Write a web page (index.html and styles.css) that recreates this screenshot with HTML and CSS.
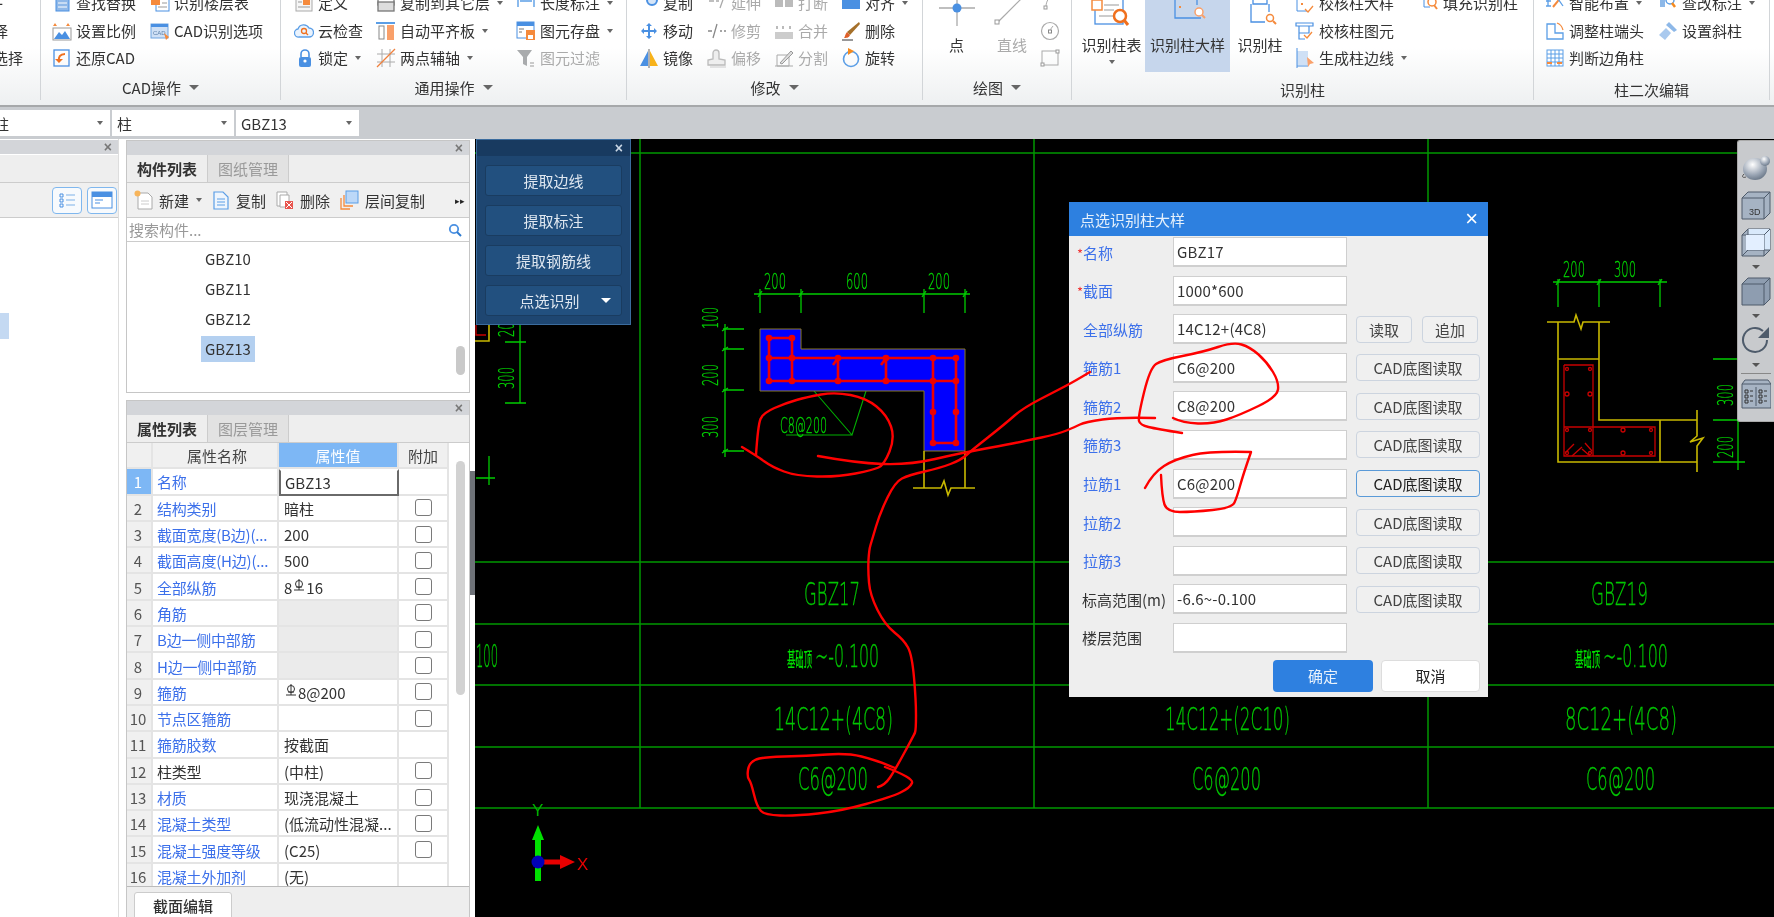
FILE: index.html
```html
<!DOCTYPE html>
<html lang="zh-CN">
<head>
<meta charset="utf-8">
<title>点选识别柱大样</title>
<link rel="stylesheet" href="styles.css">
</head>
<body>
<div class="app">
  <header class="ribbon">
    <section class="rg g0">
      <div class="rb-body">
        <div class="rb-item neg"><span class="plus">+</span></div>
        <div class="rb-item neg"><span>择</span></div>
        <div class="rb-item neg"><span>选择</span></div>
      </div>
    </section>
    <section class="rg g1">
      <div class="rb-body">
        <div class="rb-item"><svg class="ic" viewBox="0 0 20 20"><rect x="4" y="1" width="13" height="17" fill="#8fb8e8" stroke="#4a90e2"/><path d="M6 6h9M6 10h9M6 14h9" stroke="#fff"/></svg><span>查找替换</span></div>
        <div class="rb-item"><svg class="ic" viewBox="0 0 20 20"><path d="M1 5l2-3 2 3zM14 5l2-3 2 3z" fill="#f58a3c"/><rect x="1" y="7" width="18" height="12" fill="#fff" stroke="#999"/><path d="M2 18l5-7 3 3 3-4 5 8z" fill="#4a90e2"/></svg><span>设置比例</span></div>
        <div class="rb-item"><svg class="ic" viewBox="0 0 20 20"><rect x="2" y="2" width="15" height="16" fill="none" stroke="#4a90e2" stroke-width="1.3"/><path d="M13 6c-5 0-7 3-6 8" fill="none" stroke="#f0701e" stroke-width="2"/><path d="M3 11l4 4 4-4z" fill="#f0701e"/></svg><span>还原CAD</span></div>
        <div class="rb-item"><svg class="ic" viewBox="0 0 20 20"><rect x="6" y="1" width="13" height="17" fill="#fff" stroke="#4a90e2"/><rect x="1" y="3" width="9" height="9" fill="#f58a3c"/><path d="M12 6h5M12 10h5M8 14h9" stroke="#999"/></svg><span>识别楼层表</span></div>
        <div class="rb-item"><svg class="ic" viewBox="0 0 20 20"><rect x="1" y="3" width="17" height="14" fill="#cfe0f5" stroke="#6fa4e0"/><rect x="1" y="3" width="17" height="3" fill="#4a90e2"/><text class="ic-tx" x="3" y="14">CAD</text><path d="M14 12l5 4-3 3z" fill="#f58a3c"/></svg><span>CAD识别选项</span></div>
      </div>
      <div class="rb-label"><span>CAD操作</span><i class="caret big"></i></div>
    </section>
    <section class="rg g2">
      <div class="rb-body">
        <div class="rb-item"><svg class="ic" viewBox="0 0 20 20"><rect x="2" y="1" width="16" height="17" fill="#f6f6f6" stroke="#aaa"/><rect x="9" y="6" width="7" height="6" fill="#f58a3c"/><path d="M4 9h4M4 14h12" stroke="#999"/></svg><span>定义</span></div>
        <div class="rb-item"><svg class="ic" viewBox="0 0 20 20"><path d="M5 16a4 4 0 0 1-1-8 6 6 0 0 1 11-1 4.500 4.500 0 0 1 0 9z" fill="#eaf3fd" stroke="#5b9ee6" stroke-width="1.300"/><circle cx="10" cy="10" r="2.500" fill="none" stroke="#f0701e" stroke-width="1.300"/><path d="M12 12l2 2" stroke="#f0701e" stroke-width="1.300"/></svg><span>云检查</span></div>
        <div class="rb-item"><svg class="ic" viewBox="0 0 20 20"><path d="M7 9V6a4 4 0 0 1 8 0v3" fill="none" stroke="#4a90e2" stroke-width="1.600"/><rect x="5" y="9" width="12" height="10" rx="2" fill="#4a90e2"/><circle cx="11" cy="13" r="1.600" fill="#fff"/></svg><span>锁定</span><i class="caret"></i></div>
        <div class="rb-item"><svg class="ic" viewBox="0 0 20 20"><rect x="2" y="-2" width="16" height="14" fill="#fff" stroke="#777" stroke-width="1.300"/><rect x="2" y="9" width="16" height="9" fill="#ddd" stroke="#777" stroke-width="1.300"/></svg><span>复制到其它层</span><i class="caret"></i></div>
        <div class="rb-item"><svg class="ic" viewBox="0 0 20 20"><rect x="0" y="1" width="19" height="2" fill="#5b9ee6"/><rect x="3" y="5" width="5" height="13" fill="#fff" stroke="#888"/><rect x="11" y="4" width="7" height="15" fill="#f9a06a"/></svg><span>自动平齐板</span><i class="caret"></i></div>
        <div class="rb-item"><svg class="ic" viewBox="0 0 20 20"><path d="M6 1v18M14 1v18M1 6h18M1 14h18" stroke="#aaa"/><path d="M1 19L19 1" stroke="#f0803c" stroke-width="1.300"/></svg><span>两点辅轴</span><i class="caret"></i></div>
        <div class="rb-item"><svg class="ic" viewBox="0 0 20 20"><path d="M2 2v12M18 2v12M4 8h12" stroke="#5b9ee6" stroke-width="1.400"/></svg><span>长度标注</span><i class="caret"></i></div>
        <div class="rb-item"><svg class="ic" viewBox="0 0 20 20"><rect x="1" y="1" width="17" height="16" fill="#fff" stroke="#4a90e2"/><rect x="1" y="1" width="17" height="4" fill="#4a90e2"/><path d="M3 8h5M3 11h3" stroke="#777"/><rect x="10" y="9" width="9" height="10" fill="#f58a3c"/><rect x="12" y="14" width="5" height="4" fill="#fff"/></svg><span>图元存盘</span><i class="caret"></i></div>
        <div class="rb-item off"><svg class="ic" viewBox="0 0 20 20"><path d="M1 2h15l-5 7v9l-4-2V9z" fill="#a9abad"/><path d="M14 15h4M14 18h4" stroke="#bbb" stroke-width="1.500"/></svg><span>图元过滤</span></div>
      </div>
      <div class="rb-label"><span>通用操作</span><i class="caret big"></i></div>
    </section>
    <section class="rg g3">
      <div class="rb-body">
        <div class="rb-item"><svg class="ic" viewBox="0 0 20 20"><circle cx="13" cy="7" r="5" fill="#d5e5f8" stroke="#4a90e2" stroke-width="2"/></svg><span>复制</span></div>
        <div class="rb-item"><svg class="ic" viewBox="0 0 20 20"><path d="M10 2l3 3h-2v4h4V7l3 3-3 3v-2h-4v4h2l-3 3-3-3h2v-4H5v2l-3-3 3-3v2h4V5H7z" fill="#4a90e2"/></svg><span>移动</span></div>
        <div class="rb-item"><svg class="ic" viewBox="0 0 20 20"><path d="M9 3v15H1z" fill="#4a90e2"/><path d="M11 3v15h8z" fill="#f7b21a"/><path d="M10 1v19" stroke="#666"/></svg><span>镜像</span></div>
        <div class="rb-item off"><svg class="ic" viewBox="0 0 20 20"><path d="M2 8h5M9 8h3M18 1l-5 14" stroke="#aaa" stroke-width="1.300"/></svg><span>延伸</span></div>
        <div class="rb-item off"><svg class="ic" viewBox="0 0 20 20"><path d="M1 10h4M13 10h2M17 10h2M10 3l-4 14" stroke="#888" stroke-width="1.300"/></svg><span>修剪</span></div>
        <div class="rb-item off"><svg class="ic" viewBox="0 0 20 20"><path d="M1 17v-5l5-1V5a3 3 0 0 1 6 0v6l6 1v5z" fill="#eee" stroke="#bbb" stroke-width="1.300"/><path d="M3 19h16" stroke="#ccc"/></svg><span>偏移</span></div>
        <div class="rb-item off"><svg class="ic" viewBox="0 0 20 20"><rect x="1" y="5" width="8" height="9" fill="#bbb"/><rect x="11" y="5" width="8" height="9" fill="#bbb"/></svg><span>打断</span></div>
        <div class="rb-item off"><svg class="ic" viewBox="0 0 20 20"><rect x="1" y="11" width="18" height="7" fill="#ccc"/><path d="M3 5v3M9 5v3M16 5v3" stroke="#bbb" stroke-width="2"/></svg><span>合并</span></div>
        <div class="rb-item off"><svg class="ic" viewBox="0 0 20 20"><path d="M1 18h18M3 7h12v11H3z" fill="none" stroke="#aaa"/><path d="M6 15l11-12 2 2L8 16z" fill="#ddd" stroke="#999"/></svg><span>分割</span></div>
        <div class="rb-item"><svg class="ic" viewBox="0 0 20 20"><rect x="1" y="2" width="18" height="14" fill="#4a90e2"/></svg><span>对齐</span><i class="caret"></i></div>
        <div class="rb-item"><svg class="ic" viewBox="0 0 20 20"><path d="M18 1l1 2L9 14l-3-3z" fill="#a5702a"/><path d="M6 11l3 3c-1 3-4 3-6 3 1-1 1-4 3-6z" fill="#e0612a"/><path d="M1 19h11" stroke="#333"/></svg><span>删除</span></div>
        <div class="rb-item"><svg class="ic" viewBox="0 0 20 20"><circle cx="10" cy="11" r="7.500" fill="none" stroke="#5b9ee6" stroke-width="1.600"/><path d="M7 0l6 3-6 4z" fill="#f58a1e"/></svg><span>旋转</span></div>
      </div>
      <div class="rb-label"><span>修改</span><i class="caret big"></i></div>
    </section>
    <section class="rg g4">
      <div class="rb-body">
        <div class="rb-big"><svg class="big-ic" viewBox="0 0 46 46"><path d="M5 19h36M23 0v37" stroke="#aaa" stroke-width="1.300"/><circle cx="23" cy="19" r="4.500" fill="#4a90e2"/></svg><span>点</span></div>
        <div class="rb-big off"><svg class="big-ic" viewBox="0 0 46 46"><path d="M9 33L37 5" stroke="#aaa" stroke-width="1.200"/><rect x="6" y="31" width="4" height="4" fill="#fff" stroke="#999"/></svg><span>直线</span></div>
        <div class="rb-item off"><svg class="ic" viewBox="0 0 20 20"><path d="M6 14c0-6 3-10 8-13" fill="none" stroke="#aaa"/><rect x="4" y="13" width="3" height="3" fill="#fff" stroke="#999"/></svg></div>
        <div class="rb-item off"><svg class="ic" viewBox="0 0 20 20"><circle cx="10" cy="10" r="8.500" fill="none" stroke="#aaa" stroke-width="1.200"/><rect x="8.500" y="9" width="3" height="3" fill="#fff" stroke="#888"/><path d="M10 9l3-4" stroke="#aaa"/></svg></div>
        <div class="rb-item off"><svg class="ic" viewBox="0 0 20 20"><rect x="2" y="3" width="16" height="14" fill="none" stroke="#aaa"/><rect x="1" y="15" width="3" height="3" fill="#fff" stroke="#999"/><rect x="16" y="2" width="3" height="3" fill="#fff" stroke="#999"/></svg></div>
      </div>
      <div class="rb-label"><span>绘图</span><i class="caret big"></i></div>
    </section>
    <section class="rg g5">
      <div class="rb-body">
        <div class="rb-big"><svg class="big-ic" viewBox="0 0 46 46"><rect x="6" y="2" width="28" height="33" fill="#fff" stroke="#4a90e2" stroke-width="1.300"/><rect x="6" y="5" width="28" height="3" fill="#7fb2ea"/><path d="M15 16h15M15 21h10M10 27h14" stroke="#999"/><rect x="3" y="11" width="10" height="10" fill="#fff" stroke="#f58a3c" stroke-width="1.500"/><circle cx="31" cy="27" r="6" fill="#fff" stroke="#f0701e" stroke-width="2.500"/><path d="M35 31l4 5" stroke="#f0701e" stroke-width="3"/></svg><span>识别柱表</span><i class="caret under"></i></div>
        <div class="rb-big on"><svg class="big-ic" viewBox="0 0 46 46"><path d="M10 0v29h26" fill="none" stroke="#4a90e2" stroke-width="1.300"/><path d="M14 8h2M14 18h2M24 8h2" stroke="#f58a3c" stroke-width="2" fill="none"/><path d="M32 -2v18" stroke="#4a90e2" stroke-width="1.300"/><circle cx="34" cy="23" r="4" fill="#fff" stroke="#f9a06a" stroke-width="1.500"/><path d="M37 26l3 3" stroke="#f9a06a" stroke-width="2"/></svg><span>识别柱大样</span></div>
        <div class="rb-big r5"><svg class="big-ic" viewBox="0 0 46 46"><path d="M10 1h28v4H10zM16 5v10h14V5" fill="#fff" stroke="#4a90e2" stroke-width="1.300"/><path d="M14 15v18h14" fill="none" stroke="#4a90e2" stroke-width="1.300"/><path d="M32 15v8" stroke="#4a90e2" stroke-width="1.300"/><circle cx="33" cy="29" r="3.500" fill="#fff" stroke="#f58a3c" stroke-width="1.500"/><path d="M36 32l3 3" stroke="#f58a3c" stroke-width="2"/></svg><span>识别柱</span></div>
        <div class="rb-item"><svg class="ic" viewBox="0 0 20 20"><path d="M2 4v14h10" fill="none" stroke="#4a90e2"/><path d="M6 5h2M6 11h2" stroke="#f58a3c" stroke-width="2"/><path d="M10 16l3 3 5-6" fill="none" stroke="#f58a3c" stroke-width="1.300"/></svg><span>校核柱大样</span></div>
        <div class="rb-item"><svg class="ic" viewBox="0 0 20 20"><path d="M1 2h17v3H1zM4 5v7h10V5M4 5v13h6" fill="none" stroke="#4a90e2" stroke-width="1.200"/><path d="M9 14l3 3 5-6" fill="none" stroke="#f58a3c" stroke-width="1.300"/></svg><span>校核柱图元</span></div>
        <div class="rb-item"><svg class="ic" viewBox="0 0 20 20"><rect x="2" y="3" width="11" height="14" fill="#cfe0f5"/><path d="M2 0v20M2 18h11" stroke="#4a90e2"/><path d="M12 9l7 6-4 1-2 3z" fill="#f9a06a"/></svg><span>生成柱边线</span><i class="caret"></i></div>
        <div class="rb-item"><svg class="ic" viewBox="0 0 20 20"><path d="M5 0v14h6" fill="none" stroke="#4a90e2"/><circle cx="13" cy="9" r="4" fill="#fff" stroke="#f58a3c" stroke-width="1.500"/><path d="M15 12l3 4" stroke="#f58a3c" stroke-width="2"/></svg><span>填充识别柱</span></div>
      </div>
      <div class="rb-label low"><span>识别柱</span></div>
    </section>
    <section class="rg g6">
      <div class="rb-body">
        <div class="rb-item"><svg class="ic" viewBox="0 0 20 20"><path d="M1 3h5M1 8h5M1 13h5M3 3v10" stroke="#5b9ee6" stroke-width="1.300"/><path d="M8 14L17 3" stroke="#f58a3c" stroke-width="2"/><path d="M11 3l7 10" stroke="#5b9ee6" stroke-width="1.300"/></svg><span>智能布置</span><i class="caret"></i></div>
        <div class="rb-item"><svg class="ic" viewBox="0 0 20 20"><path d="M2 3h8v9h8v6H2z" fill="#fff" stroke="#5b9ee6" stroke-width="1.300"/><path d="M12 2c3 1 5 3 6 7" fill="none" stroke="#f58a3c" stroke-width="1.200"/></svg><span>调整柱端头</span></div>
        <div class="rb-item"><svg class="ic" viewBox="0 0 20 20"><rect x="2" y="2" width="16" height="16" fill="#fff" stroke="#5b9ee6"/><path d="M6 2v16M10 2v16M14 2v16M2 6h16M2 10h16M2 14h16" stroke="#5b9ee6"/><path d="M2 15h5M12 15h5" stroke="#f58a3c" stroke-width="2"/></svg><span>判断边角柱</span></div>
        <div class="rb-item"><svg class="ic" viewBox="0 0 20 20"><path d="M2 2h5v12H2z" fill="#8db8e8"/><circle cx="12" cy="7" r="4" fill="#fff" stroke="#5b9ee6" stroke-width="1.500"/><path d="M14 10l3 4" stroke="#f58a1e" stroke-width="2.500"/></svg><span>查改标注</span><i class="caret"></i></div>
        <div class="rb-item"><svg class="ic" viewBox="0 0 20 20"><path d="M11 1l8 8-3 2-8-7z" fill="#8db8e8"/><path d="M8 7l5 5-6 7-6-5z" fill="#a9c9ee"/></svg><span>设置斜柱</span></div>
      </div>
      <div class="rb-label low"><span>柱二次编辑</span></div>
    </section>
  </header>

  <div class="filterbar">
    <div class="combo first"><span class="combo-tx cut">柱</span><i class="caret"></i></div>
    <div class="combo second"><span class="combo-tx">柱</span><i class="caret"></i></div>
    <div class="combo third"><span class="combo-tx">GBZ13</span><i class="caret"></i></div>
  </div>

  <main class="workspace">
    <aside class="side">
      <div class="ph"><span class="ph-x">×</span></div>
      <div class="side-tabs"></div>
      <div class="side-tools">
        <span class="iconbtn"><svg viewBox="0 0 28 24" class="ib"><path d="M7 6h3v3H7zM7 11h3v3H7zM7 16h3v3H7z" fill="none" stroke="#4a90e2"/><path d="M13 7h9M13 12h9M13 17h9" stroke="#7fb2ea" stroke-width="1.200"/></svg></span>
        <span class="iconbtn"><svg viewBox="0 0 28 24" class="ib"><rect x="4" y="4" width="20" height="16" fill="#fff" stroke="#4a90e2"/><rect x="4" y="4" width="20" height="5" fill="#4a90e2"/><path d="M7 12h8M7 15h5" stroke="#4a90e2" stroke-width="1.200"/></svg></span>
      </div>
      <div class="side-list">
        <div class="sel-stub"></div>
        <div class="clip-row">)</div>
        <div class="clip-row">)</div>
      </div>
    </aside>

    <div class="col">
      <section class="panel list-panel">
        <div class="ph"><span class="ph-x">×</span></div>
        <div class="tabs"><span class="tab act">构件列表</span><span class="tab">图纸管理</span></div>
        <div class="tools">
          <span class="tool t-new"><svg class="ic" viewBox="0 0 20 20"><path d="M4 3h10l4 4v12H4z" fill="#fff" stroke="#aaa"/><path d="M7 11h8M7 14h8" stroke="#ccc"/><circle cx="3.500" cy="3.500" r="3" fill="#f7b45a"/></svg>新建<i class="caret"></i></span>
          <span class="tool t-copy"><svg class="ic" viewBox="0 0 20 20"><path d="M3 2h9l5 5v12H3z" fill="#eef5fd" stroke="#5b9ee6" stroke-width="1.200"/><path d="M6 9h8M6 12h8M6 15h8" stroke="#5b9ee6"/></svg>复制</span>
          <span class="tool t-del"><svg class="ic" viewBox="0 0 20 20"><path d="M2 2h10v14H2z" fill="#fff" stroke="#aaa"/><path d="M5 5h9v12H5z" fill="#fff" stroke="#aaa"/><rect x="10" y="11" width="8" height="8" fill="#e8554e"/><path d="M11 12l6 6M17 12l-6 6" stroke="#fff"/></svg>删除</span>
          <span class="tool t-layer"><svg class="ic" viewBox="0 0 20 20"><path d="M1 8v11h9" fill="none" stroke="#f58a3c" stroke-width="1.300"/><path d="M4 5v11h9" fill="none" stroke="#f58a3c" stroke-width="1.300"/><rect x="6" y="1" width="12" height="12" fill="#bcd8f8" stroke="#5b9ee6"/></svg>层间复制</span>
          <span class="tool-more">▸▸</span>
        </div>
        <div class="search"><span>搜索构件...</span><svg class="srch" viewBox="0 0 14 14"><circle cx="6" cy="6" r="4.200" fill="none" stroke="#4a90e2" stroke-width="1.800"/><path d="M9 9l4 4" stroke="#2e7bd0" stroke-width="2"/></svg></div>
        <div class="list">
          <div class="li">GBZ10</div>
          <div class="li">GBZ11</div>
          <div class="li">GBZ12</div>
          <div class="li"><span class="li-sel">GBZ13</span></div>
          <div class="list-thumb"></div>
        </div>
      </section>
      <section class="panel prop-panel">
        <div class="ph"><span class="ph-x">×</span></div>
        <div class="tabs"><span class="tab act">属性列表</span><span class="tab">图层管理</span></div>
        <div class="prop-body">
          <div class="grid">
            <div class="c n"></div><div class="c hd nm">属性名称</div><div class="c hd blue">属性值</div><div class="c hd">附加</div>
            <div class="c n blue">1</div><div class="c k">名称</div><div class="c v cur">GBZ13</div><div class="c"></div>
            <div class="c n">2</div><div class="c k">结构类别</div><div class="c v">暗柱</div><div class="c cb"><b></b></div>
            <div class="c n">3</div><div class="c k">截面宽度(B边)(...</div><div class="c v">200</div><div class="c cb"><b></b></div>
            <div class="c n">4</div><div class="c k">截面高度(H边)(...</div><div class="c v">500</div><div class="c cb"><b></b></div>
            <div class="c n">5</div><div class="c k">全部纵筋</div><div class="c v">8<svg class="bar" viewBox="0 0 12 12"><circle cx="6" cy="5" r="3.500" fill="none" stroke="#333"/><path d="M6 0v11M1 11h10M3 8h6" stroke="#333"/></svg>16</div><div class="c cb"><b></b></div>
            <div class="c n">6</div><div class="c k">角筋</div><div class="c v dis"></div><div class="c cb"><b></b></div>
            <div class="c n">7</div><div class="c k">B边一侧中部筋</div><div class="c v dis"></div><div class="c cb"><b></b></div>
            <div class="c n">8</div><div class="c k">H边一侧中部筋</div><div class="c v dis"></div><div class="c cb"><b></b></div>
            <div class="c n">9</div><div class="c k">箍筋</div><div class="c v"><svg class="bar" viewBox="0 0 12 12"><circle cx="6" cy="5" r="3.500" fill="none" stroke="#333"/><path d="M6 0v11M1 11h10M3 8h6" stroke="#333"/></svg>8@200</div><div class="c cb"><b></b></div>
            <div class="c n">10</div><div class="c k">节点区箍筋</div><div class="c v"></div><div class="c cb"><b></b></div>
            <div class="c n">11</div><div class="c k">箍筋胶数</div><div class="c v">按截面</div><div class="c"></div>
            <div class="c n">12</div><div class="c k plain">柱类型</div><div class="c v">(中柱)</div><div class="c cb"><b></b></div>
            <div class="c n">13</div><div class="c k">材质</div><div class="c v">现浇混凝土</div><div class="c cb"><b></b></div>
            <div class="c n">14</div><div class="c k">混凝土类型</div><div class="c v">(低流动性混凝...</div><div class="c cb"><b></b></div>
            <div class="c n">15</div><div class="c k">混凝土强度等级</div><div class="c v">(C25)</div><div class="c cb"><b></b></div>
            <div class="c n">16</div><div class="c k">混凝土外加剂</div><div class="c v">(无)</div><div class="c"></div>
          </div>
          <div class="prop-track"><div class="prop-thumb"></div></div>
        </div>
        <div class="prop-foot"><span class="foot-tab">截面编辑</span></div>
      </section>
    </div>

    <div class="splitter"><div class="split-handle"></div></div>

    <div class="canvas">
      <svg class="layer" viewBox="475 139 1299 778">
        <g class="grid-l">
          <path d="M475 153H1774M475 562H1774M475 624H1774M475 685H1774M475 747H1774M475 808H1774"/>
          <path d="M640 139V808M1034 139V808M1428 139V808"/>
        </g>
        <g class="dim">
          <path d="M754 294H970M760 289V313M801 289V313M924 289V313M965 289V313"/>
          <path d="M758 297l4-6M799 297l4-6M922 297l4-6M963 297l4-6"/>
          <path d="M725 324V457M723 329H744M723 349H744M723 390H744M723 451H744"/>
          <path d="M722 331l6-4M722 351l6-4M722 392l6-4M722 453l6-4"/>
          <path d="M520 324V403M505 342H526M505 403H526M489 456V485M476 478H495"/>
          <path d="M1553 282H1667M1558 279V307M1599 279V307M1660 279V307"/>
          <path d="M1556 285l4-6M1597 285l4-6M1658 285l4-6"/>
          <path d="M1713 359H1738M1713 420H1738M1713 462H1745M1738 420V470"/>
        </g>
        <path class="lead" d="M814 391L852 435L866 391M786 435H852"/>
        <g class="cad">
          <text x="764" y="289" textLength="22" lengthAdjust="spacingAndGlyphs">200</text>
          <text x="846" y="289" textLength="22" lengthAdjust="spacingAndGlyphs">600</text>
          <text x="928" y="289" textLength="22" lengthAdjust="spacingAndGlyphs">200</text>
          <text x="1563" y="277" textLength="22" lengthAdjust="spacingAndGlyphs">200</text>
          <text x="1614" y="277" textLength="22" lengthAdjust="spacingAndGlyphs">300</text>
          <text transform="translate(718 329) rotate(-90)" textLength="22" lengthAdjust="spacingAndGlyphs">100</text>
          <text transform="translate(718 386) rotate(-90)" textLength="22" lengthAdjust="spacingAndGlyphs">200</text>
          <text transform="translate(718 438) rotate(-90)" textLength="22" lengthAdjust="spacingAndGlyphs">300</text>
          <text transform="translate(514 389) rotate(-90)" textLength="22" lengthAdjust="spacingAndGlyphs">300</text>
          <text transform="translate(514 337) rotate(-90)" textLength="22" lengthAdjust="spacingAndGlyphs">200</text>
          <text transform="translate(1733 406) rotate(-90)" textLength="22" lengthAdjust="spacingAndGlyphs">300</text>
          <text transform="translate(1733 458) rotate(-90)" textLength="22" lengthAdjust="spacingAndGlyphs">200</text>
          <text x="780" y="433" textLength="47" lengthAdjust="spacingAndGlyphs">C8@200</text>
        </g>
        <g class="cad lg">
          <text x="804" y="605" textLength="56" lengthAdjust="spacingAndGlyphs">GBZ17</text>
          <text x="1591" y="605" textLength="57" lengthAdjust="spacingAndGlyphs">GBZ19</text>
          <text x="476" y="667" textLength="22" lengthAdjust="spacingAndGlyphs">100</text>
          <text x="815" y="667" textLength="64" lengthAdjust="spacingAndGlyphs">~-0.100</text>
          <text x="1603" y="667" textLength="65" lengthAdjust="spacingAndGlyphs">~-0.100</text>
          <text x="774" y="730" textLength="119" lengthAdjust="spacingAndGlyphs">14C12+(4C8)</text>
          <text x="1165" y="730" textLength="125" lengthAdjust="spacingAndGlyphs">14C12+(2C10)</text>
          <text x="1565" y="730" textLength="112" lengthAdjust="spacingAndGlyphs">8C12+(4C8)</text>
          <text x="798" y="790" textLength="70" lengthAdjust="spacingAndGlyphs">C6@200</text>
          <text x="1192" y="790" textLength="69" lengthAdjust="spacingAndGlyphs">C6@200</text>
          <text x="1586" y="790" textLength="69" lengthAdjust="spacingAndGlyphs">C6@200</text>
        </g>
        <g class="cad cn">
          <text x="787" y="667" textLength="25" lengthAdjust="spacingAndGlyphs">基础顶</text>
          <text x="1575" y="667" textLength="25" lengthAdjust="spacingAndGlyphs">基础顶</text>
        </g>
        <path class="col-blue" d="M760 329H801V349H965V451H924V391H760Z"/>
        <g class="bar-red">
          <path d="M769 338H792V381M769 338V381M769 358H956M769 381H956M933 358V443H956V358M838 358V381M886 358V381M838 358l-5 7M886 358l-5 7"/>
          <g class="dots">
            <circle cx="769" cy="338" r="3.300"/><circle cx="792" cy="338" r="3.300"/><circle cx="769" cy="358" r="3.300"/><circle cx="792" cy="358" r="3.300"/>
            <circle cx="769" cy="381" r="3.300"/><circle cx="792" cy="381" r="3.300"/><circle cx="838" cy="358" r="3.300"/><circle cx="838" cy="381" r="3.300"/>
            <circle cx="886" cy="358" r="3.300"/><circle cx="886" cy="381" r="3.300"/><circle cx="933" cy="358" r="3.300"/><circle cx="956" cy="358" r="3.300"/>
            <circle cx="933" cy="381" r="3.300"/><circle cx="956" cy="381" r="3.300"/><circle cx="933" cy="412" r="3.300"/><circle cx="956" cy="412" r="3.300"/>
            <circle cx="933" cy="443" r="3.300"/><circle cx="956" cy="443" r="3.300"/>
          </g>
        </g>
        <path class="yellow" d="M924 451V488M965 451V488M913 488H941L944 481L948 495L951 488H975"/>
        <path class="yellow" d="M1558 322V462H1697M1599 322V420H1697M1547 322H1574L1576 315L1581 329L1583 322H1610M1558 359H1599M1660 420V462M1697 410V436L1690 442L1703 438L1697 446V472"/>
        <g class="dark-red">
          <path d="M1564 365H1593V456M1564 365V456H1655V427H1564"/>
          <path d="M1566 452L1574 444M1572 456L1582 447M1590 456L1582 449M1592 451L1585 443"/>
          <circle cx="1567" cy="369" r="1.500"/><circle cx="1590" cy="369" r="1.500"/><circle cx="1567" cy="394" r="2"/><circle cx="1590" cy="394" r="2"/>
          <circle cx="1567" cy="430" r="1.500"/><circle cx="1590" cy="430" r="1.500"/><circle cx="1623" cy="430" r="2"/><circle cx="1651" cy="430" r="1.500"/>
          <circle cx="1567" cy="453" r="1.500"/><circle cx="1590" cy="453" r="1.500"/><circle cx="1623" cy="453" r="2"/><circle cx="1651" cy="453" r="1.500"/>
        </g>
        <path class="yellow" d="M475 341H489V325"/>
        <path class="dark-red" d="M476 325V335H486"/>
        <g class="axis">
          <path class="ax-g" d="M538 881V832"/>
          <path class="ax-gf" d="M538 825L532 840H544Z"/>
          <path class="ax-r" d="M544 862H562"/>
          <path class="ax-rf" d="M575 862L560 855V869Z"/>
          <circle cx="538" cy="862" r="6.500" class="ax-b"/>
          <text x="532" y="816" class="ax-ty">Y</text>
          <text x="577" y="870" class="ax-tx">X</text>
        </g>
      </svg>

      <div class="float-tools">
        <div class="ft-head"><span>×</span></div>
        <div class="ft-btn">提取边线</div>
        <div class="ft-btn">提取标注</div>
        <div class="ft-btn">提取钢筋线</div>
        <div class="ft-btn split"><span>点选识别</span><i class="caret white"></i></div>
      </div>

      <section class="dialog">
        <div class="dl-head"><span>点选识别柱大样</span><span class="dl-x">×</span></div>
        <div class="dl-body">
          <div class="dl-row"><label class="lb star">名称</label><div class="inp">GBZ17</div></div>
          <div class="dl-row"><label class="lb star">截面</label><div class="inp">1000*600</div></div>
          <div class="dl-row"><label class="lb">全部纵筋</label><div class="inp">14C12+(4C8)</div><div class="btn sm">读取</div><div class="btn sm">追加</div></div>
          <div class="dl-row"><label class="lb">箍筋1</label><div class="inp">C6@200</div><div class="btn">CAD底图读取</div></div>
          <div class="dl-row"><label class="lb">箍筋2</label><div class="inp">C8@200</div><div class="btn">CAD底图读取</div></div>
          <div class="dl-row"><label class="lb">箍筋3</label><div class="inp"></div><div class="btn">CAD底图读取</div></div>
          <div class="dl-row"><label class="lb">拉筋1</label><div class="inp">C6@200</div><div class="btn focus">CAD底图读取</div></div>
          <div class="dl-row"><label class="lb">拉筋2</label><div class="inp"></div><div class="btn">CAD底图读取</div></div>
          <div class="dl-row"><label class="lb">拉筋3</label><div class="inp"></div><div class="btn">CAD底图读取</div></div>
          <div class="dl-row"><label class="lb dark">标高范围(m)</label><div class="inp">-6.6~-0.100</div><div class="btn">CAD底图读取</div></div>
          <div class="dl-row"><label class="lb dark">楼层范围</label><div class="inp"></div></div>
          <div class="dl-foot"><div class="ok">确定</div><div class="cancel">取消</div></div>
        </div>
      </section>

      <nav class="view-tools">
        <svg class="vt sphere" viewBox="0 0 30 28"><defs><radialGradient id="sp" cx="0.4" cy="0.3" r="0.8"><stop offset="0" stop-color="#fff"/><stop offset="0.6" stop-color="#99a4b3"/><stop offset="1" stop-color="#5d6b7c"/></radialGradient></defs><ellipse cx="14" cy="15" rx="12" ry="11" fill="url(#sp)"/><circle cx="24" cy="7" r="5" fill="url(#sp)"/><path d="M3 20c-3 3-1 4 2 3" fill="none" stroke="#555"/></svg>
        <svg class="vt" viewBox="0 0 30 30"><path d="M1 8l6-6h22v21l-6 6H1z" fill="#a6b3c3" stroke="#4e5b6b"/><path d="M1 8h22v21M23 8l6-6" fill="none" stroke="#4e5b6b"/><text class="vt-tx" x="8" y="25">3D</text></svg>
        <svg class="vt" viewBox="0 0 30 30"><path d="M1 8l6-6h22v21l-6 6H1z" fill="#a6b3c3" stroke="#4e5b6b"/><rect x="7" y="2" width="22" height="21" fill="#d9e9fb"/><path d="M1 8h22v21M23 8l6-6M7 2v21h22M7 23l-6 6" fill="none" stroke="#4e5b6b"/><rect x="5" y="8" width="18" height="15" fill="#e3efff"/></svg>
        <i class="vt-caret"></i>
        <svg class="vt" viewBox="0 0 30 30"><path d="M1 8l6-6h22v21l-6 6H1z" fill="#8e9db0" stroke="#4e5b6b"/><path d="M1 8h22v21M23 8l6-6" fill="none" stroke="#4e5b6b"/></svg>
        <i class="vt-caret"></i>
        <svg class="vt" viewBox="0 0 30 30"><path d="M26 15a12 12 0 1 1-4-9" fill="none" stroke="#4e5b6b" stroke-width="2"/><path d="M28 2v11H17z" fill="#4e5b6b"/></svg>
        <i class="vt-caret"></i>
        <hr class="vt-hr">
        <svg class="vt" viewBox="0 0 30 30"><path d="M1 5l3-4h23l3 4v24H1z" fill="#a6b3c3" stroke="#4e5b6b"/><path d="M1 5h29M15 8v19" stroke="#4e5b6b"/><path d="M4 11h3v3H4zM4 16h3v3H4zM4 21h3v3H4zM18 11h3v3h-3zM18 16h3v3h-3zM18 21h3v3h-3z" fill="none" stroke="#333"/><path d="M9 12h3M9 17h3M9 22h3M23 12h3M23 17h3M23 22h3" stroke="#333"/></svg>
      </nav>

      <svg class="layer ink" viewBox="475 139 1299 778">
        <path d="M742 447Q757 456 764.500 461.500Q772 467 784 471.500Q796 476 817 476.500Q838 477 855.500 473.500Q873 470 878.500 467.500Q884 465 889.500 451.500Q895 438 891 426.500Q887 415 876.500 406.500Q866 398 850.500 395Q835 392 821 394.500Q807 397 796.500 400Q786 403 774.500 408Q763 413 760.500 419Q758 425 756 455"/>
        <path d="M818 456Q856 463 882.500 464Q909 465 935 459Q961 453 980.500 449.500Q1000 446 1012.500 443.500Q1025 441 1041.500 437.500Q1058 434 1066.500 430.500Q1075 427 1080 424.500Q1085 422 1102.500 419.500Q1120 417 1155 418"/>
        <path d="M1090 372Q1075 381 1066.500 385.500Q1058 390 1040.500 399Q1023 408 1014 416Q1005 424 988.500 437Q972 450 966.500 455Q961 460 950.500 464Q940 468 924.500 471.500Q909 475 902 478.500Q895 482 887.500 497.500Q880 513 876 526.500Q872 540 870.500 545Q869 550 868.500 560Q868 570 869 582.500Q870 595 877.500 610Q885 625 894.500 632.500Q904 640 908 647.500Q912 655 914 677.500Q916 700 916 715Q916 730 915 732.500Q914 735 904.500 752.500Q895 770 890 777.500Q885 785 878 787"/>
        <path d="M885 767Q914 778 912 783Q910 788 900.500 792.500Q891 797 866 804Q841 811 818 813.500Q795 816 780 815.500Q765 815 761 811Q757 807 754 794.500Q751 782 749 779.500Q747 777 748 770Q749 763 755 760Q761 757 784 756.500Q807 756 827 754.500Q847 753 861.500 756.500Q876 760 895 768"/>
        <path d="M1173 418Q1183 423 1198 423.500Q1213 424 1226.500 419.500Q1240 415 1258.500 406Q1277 397 1278 389.500Q1279 382 1273 372Q1267 362 1258.500 354.500Q1250 347 1241.500 344.500Q1233 342 1218 347Q1203 352 1182.500 356Q1162 360 1156 364Q1150 368 1144 392.500Q1138 417 1139 421Q1140 425 1148.500 427Q1157 429 1182 433"/>
        <path d="M1145 488Q1153 473 1164 466Q1175 459 1192.500 455Q1210 451 1251 452Q1243 475 1240 486Q1237 497 1234.500 502.500Q1232 508 1212.500 510Q1193 512 1180 512Q1167 512 1164.500 504.500Q1162 497 1161 475"/>
      </svg>
    </div>
  </main>
</div>
</body>
</html>
```
FILE: styles.css
```css
* { box-sizing: border-box; }
html, body { margin: 0; padding: 0; width: 1774px; height: 917px; overflow: hidden; background: #fff; }
body { font-family: "Noto Sans CJK SC", "Liberation Sans", sans-serif; font-size: 15px; color: #333; }
.app { width: 1774px; height: 917px; overflow: hidden; display: flex; flex-direction: column; filter: blur(0.45px); }

/* ribbon */
.ribbon { height: 107px; flex: none; display: flex; overflow: hidden; border-bottom: 2px solid #a6a8aa; background: linear-gradient(#fff 0, #fff 45%, #eef0f1 100%); }
.rg { flex: none; height: 100px; display: flex; flex-direction: column; border-right: 1px solid #d2d5d8; }
.g0 { width: 41px; }
.g1 { width: 240px; }
.g2 { width: 346px; }
.g3 { width: 296px; }
.g4 { width: 149px; }
.g5 { width: 462px; }
.g6 { width: 236px; }
.rb-body { height: 83px; margin-top: -11px; flex: none; display: grid; grid-template-rows: 28px 27.5px 27.5px; grid-auto-flow: column; }
.g1 .rb-body { padding-left: 11px; grid-template-columns: 98px 1fr; }
.g2 .rb-body { padding-left: 13px; grid-template-columns: 82px 140px 1fr; }
.g3 .rb-body { padding-left: 12px; grid-template-columns: 68px 67px 67px 1fr; }
.g4 .rb-body { padding-left: 6px; grid-template-columns: 55px 56px 1fr; }
.g5 .rb-body { grid-template-columns: 73px 85px 65px 124px 1fr; }
.g6 .rb-body { padding-left: 11px; grid-template-columns: 113px 1fr; }
.rb-item { display: flex; align-items: center; white-space: nowrap; line-height: 20px; }
.rb-item.neg { margin-left: -7px; }
.plus { font-size: 18px; }
.rb-big { grid-row: 1 / span 3; display: flex; flex-direction: column; align-items: center; white-space: nowrap; line-height: 20px; }
.rb-big.on { background: #c6d6ec; }
.rb-big.r5 { padding-right: 5px; }
.g5 .rb-big:first-child { padding-left: 6px; }
.big-ic { width: 46px; height: 46px; flex: none; }
.ic { width: 20px; height: 20px; flex: none; margin-right: 4px; }
.ic-tx { font-family: "Liberation Sans", sans-serif; font-size: 6px; fill: #5b7fa8; }
.off { color: #aaa; }
.caret { display: inline-block; width: 0; height: 0; border-left: 3.5px solid transparent; border-right: 3.5px solid transparent; border-top: 4px solid #666; margin-left: 7px; flex: none; }
.caret.big { border-left-width: 5px; border-right-width: 5px; border-top-width: 5px; margin-left: 8px; }
.caret.under { margin: 5px 0 0; }
.rb-label { flex: 1; display: flex; align-items: center; justify-content: center; font-size: 15px; padding-top: 2px; }
.rb-label.low { padding-top: 6px; }

/* filter bar */
.filterbar { height: 32px; flex: none; display: flex; gap: 2px; padding-top: 3px; background: #c9ccd0; }
.combo { height: 26px; background: #fff; display: flex; align-items: center; justify-content: space-between; padding: 0 7px 0 5px; overflow: hidden; }
.combo.first { width: 110px; }
.combo.second { width: 122px; }
.combo.third { width: 123px; }
.combo .caret { margin-left: 0; }
.cut { margin-left: -11px; }

/* workspace */
.workspace { flex: 1; min-height: 0; display: flex; background: #fff; }
.ph { height: 14px; flex: none; background: #d3d5d9; display: flex; justify-content: flex-end; align-items: center; padding-right: 6px; }
.ph-x { font-family: "Liberation Sans", sans-serif; font-size: 14px; line-height: 14px; color: #777; font-weight: bold; }
.side { width: 119px; flex: none; display: flex; flex-direction: column; padding-top: 1px; border-right: 1px solid #ddd; }
.side-tabs { height: 28px; flex: none; background: #eee; margin-top: 1px; border-bottom: 1px solid #ccc; }
.side-tools { height: 35px; flex: none; background: #f0f0f0; display: flex; justify-content: flex-end; align-items: center; gap: 5px; padding-right: 1px; border-bottom: 1px solid #ccc; }
.iconbtn { width: 30px; height: 27px; border: 1px solid #7fb7ee; border-radius: 4px; background: #f7fafd; display: flex; align-items: center; justify-content: center; }
.ib { width: 28px; height: 24px; }
.side-list { flex: 1; position: relative; padding-top: 95px; }
.sel-stub { width: 9px; height: 26px; background: #c4d9f2; }
.clip-row { height: 30px; line-height: 30px; margin-left: -4px; color: #333; padding-top: 4px; }

.col { width: 344px; flex: none; margin-left: 7px; padding-top: 1px; display: flex; flex-direction: column; gap: 7px; }
.panel { border: 1px solid #c6c6c6; background: #fff; display: flex; flex-direction: column; overflow: hidden; }
.list-panel { height: 253px; flex: none; }
.prop-panel { flex: 1; min-height: 0; border-bottom: 0; }
.tabs { height: 28px; flex: none; background: #eee; display: flex; border-bottom: 1px solid #ccc; }
.tab { width: 81px; line-height: 27px; text-align: center; background: #e2e2e2; color: #999; border-right: 1px solid #ccc; }
.tab.act { background: #eee; color: #333; font-weight: bold; }
.tools { height: 35px; flex: none; background: #f0f0f0; display: flex; align-items: center; position: relative; border-bottom: 1px solid #ccc; padding-left: 7px; white-space: nowrap; }
.tool { display: flex; align-items: center; }
.tool .ic { margin-right: 5px; }
.t-new { width: 77px; }
.t-copy { width: 64px; }
.t-del { width: 65px; }
.tool-more { position: absolute; right: 4px; font-size: 9px; color: #222; }
.search { height: 24px; flex: none; display: flex; justify-content: space-between; align-items: center; padding: 0 7px 0 2px; color: #999; border-bottom: 1px solid #ccc; }
.srch { width: 14px; height: 14px; }
.list { flex: 1; position: relative; padding-top: 2px; }
.li { height: 30px; line-height: 30px; padding-left: 78px; }
.li-sel { display: inline-block; line-height: 26px; background: #b4d0f0; margin-left: -4px; padding: 0 4px; }
.list-thumb { position: absolute; right: 4px; top: 104px; width: 9px; height: 29px; border-radius: 5px; background: #c9c9c9; }

.prop-body { height: 443px; flex: none; display: flex; overflow: hidden; background: #fff; }
.grid { width: 322px; flex: none; display: grid; grid-template-columns: 26px 126px 120px 50px; grid-auto-rows: 26.3px; }
.c { border-right: 2px solid #e4e4e4; border-bottom: 2px solid #e4e4e4; padding-top: 2px; display: flex; align-items: center; white-space: nowrap; overflow: hidden; line-height: 20px; }
.n { background: #f0f0f0; justify-content: center; color: #555; padding-right: 2px; }
.hd { justify-content: center; background: #f0f0f0; color: #444; }
.hd.nm { padding-left: 4px; }
.c.blue { background: #7db7f5; color: #fff; }
.k { color: #3c70ea; padding-left: 4px; letter-spacing: -0.2px; }
.k.plain { color: #333; }
.v { padding-left: 5px; }
.v.cur { border: 2px solid #6a6a6a; border-top-color: #fff; padding-left: 4px; }
.v.dis { background: #ebebeb; }
.cb { justify-content: center; padding-top: 0; }
.cb b { display: block; width: 17px; height: 17px; border: 1px solid #7a7a7a; border-radius: 3px; background: #fff; }
.bar { width: 12px; height: 12px; margin: -5px 1px 0; flex: none; }
.prop-track { flex: 1; position: relative; }
.prop-thumb { position: absolute; left: 7px; top: 18px; width: 9px; height: 234px; border-radius: 5px; background: #d2d2d2; }
.prop-foot { flex: 1; background: #eee; border-top: 1px solid #bbb; padding: 5px 0 0 7px; }
.foot-tab { display: block; width: 98px; height: 30px; background: #fff; border: 1px solid #ccc; border-radius: 3px 3px 0 0; text-align: center; line-height: 26px; font-weight: 500; }

.splitter { width: 5px; flex: none; padding-top: 332px; background: #fff; }
.split-handle { height: 124px; background: #6e7278; }

/* canvas */
.canvas { flex: 1; min-width: 0; position: relative; background: #000; overflow: hidden; }
.layer { position: absolute; left: 0; top: 0; width: 1299px; height: 778px; }
.ink { pointer-events: none; fill: none; stroke: #ff0000; stroke-width: 2.4; stroke-linejoin: round; stroke-linecap: round; }
.grid-l { fill: none; stroke: #009800; stroke-width: 1.5; }
.dim { fill: none; stroke: #00cc00; stroke-width: 1.3; }
.lead { fill: none; stroke: #00b000; stroke-width: 1.1; }
.cad { font-family: "DejaVu Sans", sans-serif; font-weight: 200; font-size: 22px; fill: #00d800; stroke: #00d800; stroke-width: 0.3; }
.cad.lg { font-size: 32px; fill: #00c800; stroke: #00c800; }
.cad.cn { font-family: "Noto Sans CJK SC", sans-serif; font-weight: 500; font-size: 20px; fill: #00e000; stroke: none; }
.col-blue { fill: #0000ff; stroke: #8a7a20; stroke-width: 1; }
.bar-red { fill: none; stroke: #ee0000; stroke-width: 2.6; }
.dots { fill: #ee0000; stroke: none; }
.yellow { fill: none; stroke: #c8b800; stroke-width: 1.6; }
.dark-red { fill: none; stroke: #c80000; stroke-width: 1.3; }
.ax-g { fill: none; stroke: #00e000; stroke-width: 6; }
.ax-gf { fill: #00e000; }
.ax-r { fill: none; stroke: #e80000; stroke-width: 5; }
.ax-rf { fill: #e80000; }
.ax-b { fill: #0000b8; }
.ax-ty, .ax-tx { font-family: "Liberation Sans", sans-serif; font-size: 17px; }
.ax-ty { fill: #00b000; }
.ax-tx { fill: #e80000; }

.float-tools { position: absolute; left: 1px; top: 0; width: 155px; height: 186px; background: #1e4671; border: 1px solid #3b6c9e; display: flex; flex-direction: column; gap: 9px; padding: 0 8px; }
.ft-head { height: 16px; flex: none; margin: 0 -8px 0; background: #183a60; text-align: right; padding-right: 7px; color: #c9d6e4; font-family: "Liberation Sans", sans-serif; font-weight: bold; font-size: 14px; line-height: 16px; }
.ft-btn { height: 31px; flex: none; background: #22507f; border: 1px solid #1a3c60; border-radius: 3px; color: #dfe7f0; display: flex; align-items: center; justify-content: center; position: relative; }
.ft-btn.split span { margin-right: 8px; }
.caret.white { position: absolute; right: 10px; border-left-width: 5px; border-right-width: 5px; border-top: 5px solid #fff; }

.dialog { position: absolute; left: 594px; top: 63px; width: 419px; height: 495px; background: #eee; display: flex; flex-direction: column; }
.dl-head { height: 34px; flex: none; background: #2d80e0; color: #e6f0fb; display: flex; justify-content: space-between; align-items: center; padding: 0 10px 0 11px; }
.dl-x { color: #fff; font-family: "Liberation Sans", sans-serif; font-size: 22px; line-height: 22px; }
.dl-body { flex: 1; padding: 1px 8px 0; }
.dl-row { height: 30px; margin-bottom: 8.6px; display: flex; align-items: center; white-space: nowrap; }
.lb { width: 96px; flex: none; padding-left: 6px; color: #3c70ea; }
.lb.star { padding-left: 0; }
.lb.star::before { content: "*"; color: #f03030; display: inline-block; width: 6px; font-size: 13px; }
.lb.dark { color: #333; padding-left: 5px; }
.inp { width: 174px; height: 30px; flex: none; background: #fff; border: 1px solid #cfcfcf; border-bottom-width: 2px; padding-left: 3px; line-height: 27px; letter-spacing: 0.2px; }
.btn { width: 124px; height: 27px; flex: none; margin-left: 9px; background: #f0f0f0; border: 1px solid #ccd4df; border-radius: 4px; display: flex; align-items: center; justify-content: center; color: #444; }
.btn.sm { width: 56px; }
.btn.sm + .btn.sm { margin-left: 10px; }
.btn.focus { border-color: #5a9ad8; color: #222; }
.dl-foot { display: flex; justify-content: flex-end; gap: 8px; margin-top: -2px; }
.ok, .cancel { height: 32px; border-radius: 4px; display: flex; align-items: center; justify-content: center; }
.ok { width: 100px; background: #2e80e0; color: #e8f1fb; }
.cancel { width: 99px; background: #fff; border: 1px solid #ddd; color: #222; }

.view-tools { position: absolute; left: 1262px; top: 1px; width: 37px; height: 282px; background: #c8cacd; border: 1px solid #aaa; border-right: 0; border-radius: 3px 0 0 3px; padding-top: 13px; display: flex; flex-direction: column; align-items: center; }
.vt { width: 30px; height: 30px; margin-bottom: 7px; flex: none; }
.vt.sphere { height: 28px; margin-bottom: 8px; }
.vt-caret { width: 0; height: 0; flex: none; border-left: 4px solid transparent; border-right: 4px solid transparent; border-top: 4px solid #555; margin: 1px 0 7px; }
.vt-hr { width: 30px; height: 1px; margin: -1px 0 5px; border: 0; background: #888; flex: none; }
.vt-tx { font-family: "Liberation Sans", sans-serif; font-size: 9px; fill: #333; }
```
